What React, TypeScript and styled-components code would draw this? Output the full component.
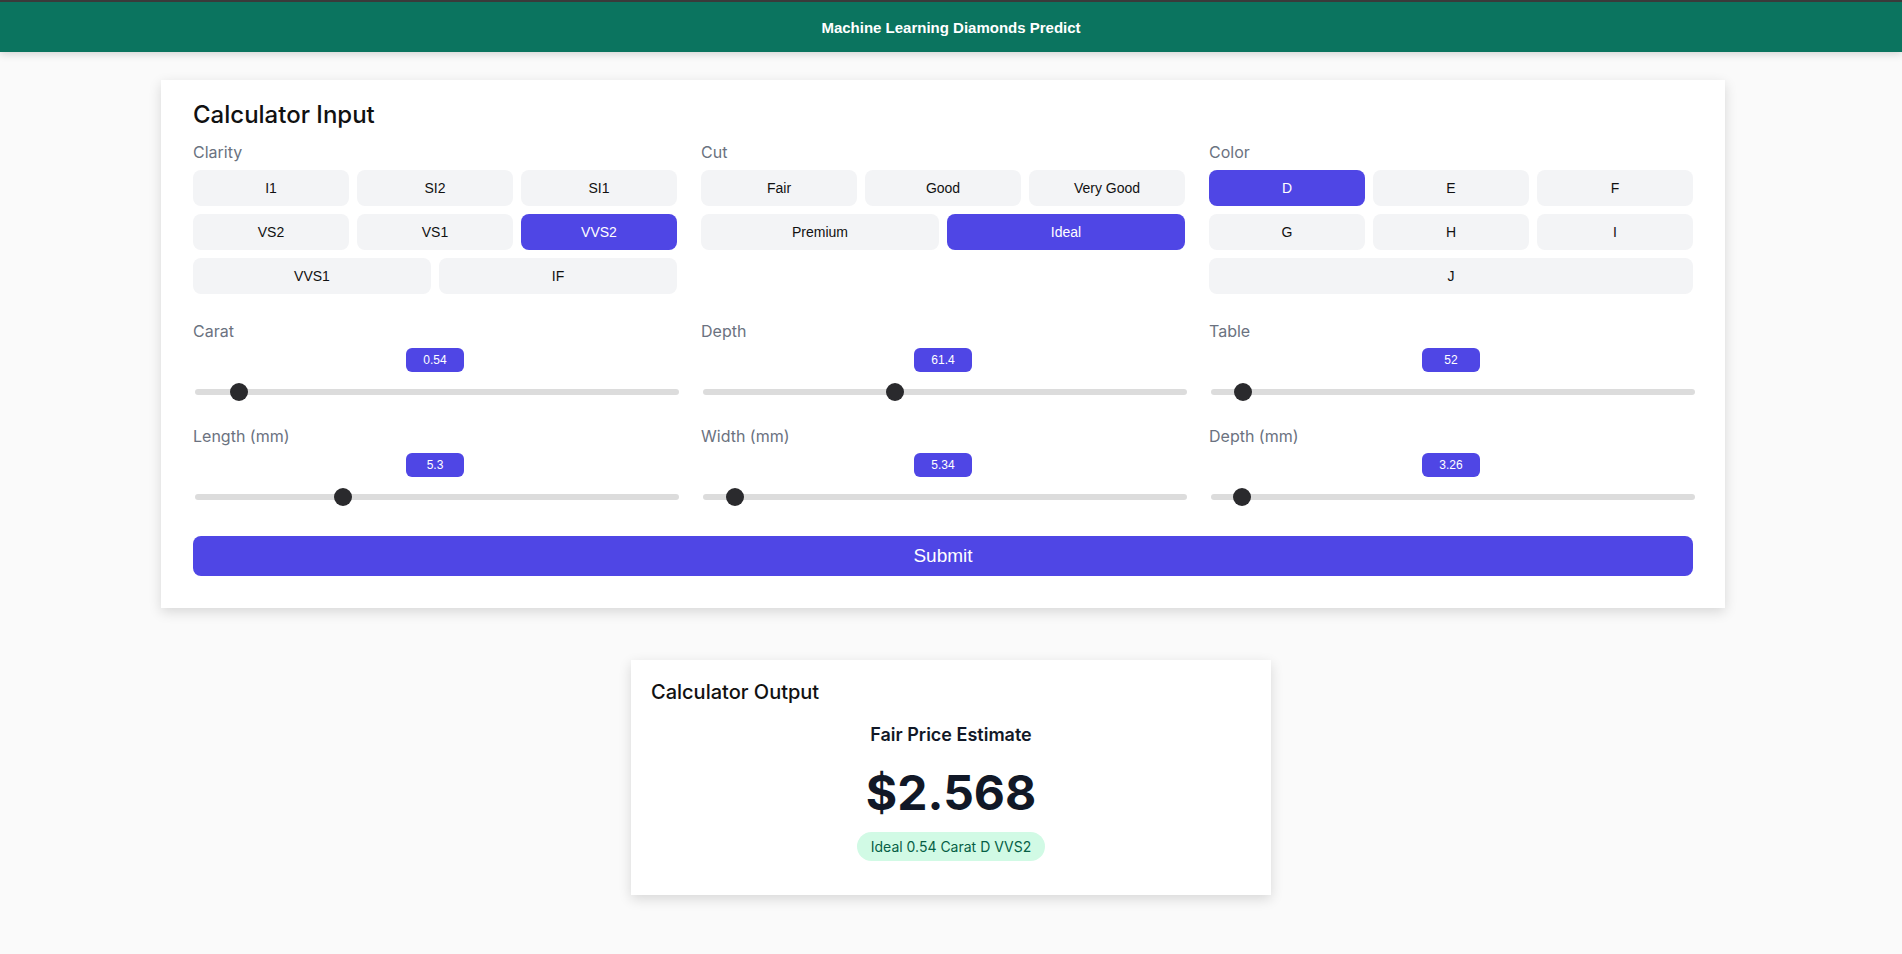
import React, { useState } from "react";
import styled, { createGlobalStyle } from "styled-components";

const GlobalStyle = createGlobalStyle`
  * { box-sizing: border-box; }
  html, body { margin: 0; padding: 0; background: #fafafa; }
  body { font-family: Inter, "Noto Sans", sans-serif; min-height: 954px; }
`;

const Header = styled.header`
  height: 52px;
  border-top: 2px solid #3a3a3a;
  background: #0b745f;
  display: flex;
  align-items: center;
  justify-content: center;
  box-shadow: 0 2px 8px rgba(0, 0, 0, 0.16);
  color: #ffffff;
  font: bold 15px "Liberation Sans", Arial, sans-serif;
`;

const Main = styled.main`
  display: flex;
  flex-direction: column;
  align-items: center;
  padding: 28px 0 40px;
`;

const InputCard = styled.section`
  width: 1564px;
  margin-right: 16px;
  background: #ffffff;
  padding: 20px 32px 32px;
  box-shadow: 0 4px 12px rgba(0, 0, 0, 0.14);
`;

const CardTitle = styled.h2<{ $size: number }>`
  margin: 0;
  font-family: Inter, sans-serif;
  font-size: ${(p) => p.$size}px;
  font-weight: 500;
  line-height: normal;
  color: #111111;
`;

const OptionsGrid = styled.div`
  display: grid;
  grid-template-columns: repeat(3, 1fr);
  column-gap: 24px;
  margin-top: 14px;
`;

const Field = styled.div`
  display: flex;
  flex-direction: column;
  min-width: 0;
`;

const FieldLabel = styled.div`
  font-family: Inter, sans-serif;
  font-size: 16px;
  line-height: 19px;
  color: #6b7280;
`;

const ButtonGroup = styled.div`
  display: flex;
  flex-wrap: wrap;
  gap: 8px;
  margin-top: 8px;
`;

const OptionButton = styled.button<{ $active: boolean }>`
  flex: 1 0 140px;
  height: 36px;
  border: none;
  border-radius: 8px;
  background: ${(p) => (p.$active ? "#4f46e5" : "#f3f4f6")};
  color: ${(p) => (p.$active ? "#ffffff" : "#111111")};
  font: 14px "Liberation Sans", Arial, sans-serif;
  cursor: pointer;
  padding: 0;
`;

const SliderGrid = styled.div`
  display: grid;
  grid-template-columns: repeat(3, 1fr);
  column-gap: 24px;
  row-gap: 25px;
  margin-top: 28px;
`;

const ValueBadge = styled.div`
  align-self: center;
  width: 58px;
  height: 24px;
  margin-top: 7px;
  border-radius: 6px;
  background: #4f46e5;
  color: #ffffff;
  display: flex;
  align-items: center;
  justify-content: center;
  font: 12px "Liberation Sans", Arial, sans-serif;
`;

const SliderWrap = styled.div`
  height: 20px;
  margin-top: 10px;
  display: flex;
  align-items: center;
`;

const Range = styled.input`
  -webkit-appearance: none;
  appearance: none;
  flex: 0 0 100%;
  width: 100%;
  height: 6px;
  margin: 0 0 0 2px;
  border-radius: 3px;
  background: #dcdcdc;
  outline: none;
  &::-webkit-slider-thumb {
    -webkit-appearance: none;
    appearance: none;
    width: 18px;
    height: 18px;
    border-radius: 50%;
    background: #2a2a2d;
    border: none;
    cursor: pointer;
  }
  &::-moz-range-thumb {
    width: 18px;
    height: 18px;
    border-radius: 50%;
    background: #2a2a2d;
    border: none;
  }
`;

const SubmitButton = styled.button`
  display: block;
  width: 100%;
  height: 40px;
  margin-top: 29px;
  border: none;
  border-radius: 8px;
  background: #4f46e5;
  color: #ffffff;
  font: 19px "Liberation Sans", Arial, sans-serif;
  cursor: pointer;
`;

const OutputCard = styled.section`
  width: 640px;
  margin-top: 52px;
  background: #ffffff;
  padding: 20px 20px 34px;
  box-shadow: 0 4px 12px rgba(0, 0, 0, 0.14);
  display: flex;
  flex-direction: column;
`;

const EstimateLabel = styled.div`
  margin-top: 20px;
  text-align: center;
  font-family: Inter, sans-serif;
  font-size: 18px;
  font-weight: 600;
  color: #111827;
`;

const Price = styled.div`
  margin-top: 18px;
  text-align: center;
  font-family: Inter, sans-serif;
  font-size: 48px;
  font-weight: 700;
  color: #111827;
`;

const SummaryPill = styled.div`
  align-self: center;
  margin-top: 10px;
  padding: 4px 14px;
  line-height: 21px;
  border-radius: 999px;
  background: #d1fae5;
  color: #065f46;
  font-family: Inter, sans-serif;
  font-size: 14px;
`;

const clarities = ["I1", "SI2", "SI1", "VS2", "VS1", "VVS2", "VVS1", "IF"];
const cuts = ["Fair", "Good", "Very Good", "Premium", "Ideal"];
const colors = ["D", "E", "F", "G", "H", "I", "J"];

type SliderDef = { key: string; label: string; min: number; max: number; step: number; value: number };

const initialSliders: SliderDef[] = [
  { key: "carat", label: "Carat", min: 0.2, max: 4.7, step: 0.01, value: 0.54 },
  { key: "depth", label: "Depth", min: 50, max: 79, step: 0.1, value: 61.4 },
  { key: "table", label: "Table", min: 50, max: 90, step: 1, value: 52 },
  { key: "x", label: "Length (mm)", min: 3, max: 10.7, step: 0.01, value: 5.3 },
  { key: "y", label: "Width (mm)", min: 5, max: 12, step: 0.01, value: 5.34 },
  { key: "z", label: "Depth (mm)", min: 3, max: 8.5, step: 0.01, value: 3.26 },
];

function OptionField({
  label,
  options,
  value,
  onChange,
}: {
  label: string;
  options: string[];
  value: string;
  onChange: (v: string) => void;
}) {
  return (
    <Field>
      <FieldLabel>{label}</FieldLabel>
      <ButtonGroup>
        {options.map((o) => (
          <OptionButton key={o} $active={o === value} onClick={() => onChange(o)}>
            {o}
          </OptionButton>
        ))}
      </ButtonGroup>
    </Field>
  );
}

export default function App() {
  const [clarity, setClarity] = useState("VVS2");
  const [cut, setCut] = useState("Ideal");
  const [color, setColor] = useState("D");
  const [sliders, setSliders] = useState<SliderDef[]>(initialSliders);

  const update = (key: string, v: number) =>
    setSliders((s) => s.map((d) => (d.key === key ? { ...d, value: v } : d)));

  const carat = sliders.find((s) => s.key === "carat")!.value;

  return (
    <>
      <GlobalStyle />
      <Header>Machine Learning Diamonds Predict</Header>
      <Main>
        <InputCard>
          <CardTitle $size={24}>Calculator Input</CardTitle>
          <OptionsGrid>
            <OptionField label="Clarity" options={clarities} value={clarity} onChange={setClarity} />
            <OptionField label="Cut" options={cuts} value={cut} onChange={setCut} />
            <OptionField label="Color" options={colors} value={color} onChange={setColor} />
          </OptionsGrid>
          <SliderGrid>
            {sliders.map((s) => (
              <Field key={s.key}>
                <FieldLabel>{s.label}</FieldLabel>
                <ValueBadge>{s.value}</ValueBadge>
                <SliderWrap>
                  <Range
                    type="range"
                    min={s.min}
                    max={s.max}
                    step={s.step}
                    value={s.value}
                    onChange={(e) => update(s.key, parseFloat(e.target.value))}
                  />
                </SliderWrap>
              </Field>
            ))}
          </SliderGrid>
          <SubmitButton>Submit</SubmitButton>
        </InputCard>
        <OutputCard>
          <CardTitle $size={20}>Calculator Output</CardTitle>
          <EstimateLabel>Fair Price Estimate</EstimateLabel>
          <Price>$2.568</Price>
          <SummaryPill>
            {cut} {carat} Carat {color} {clarity}
          </SummaryPill>
        </OutputCard>
      </Main>
    </>
  );
}
